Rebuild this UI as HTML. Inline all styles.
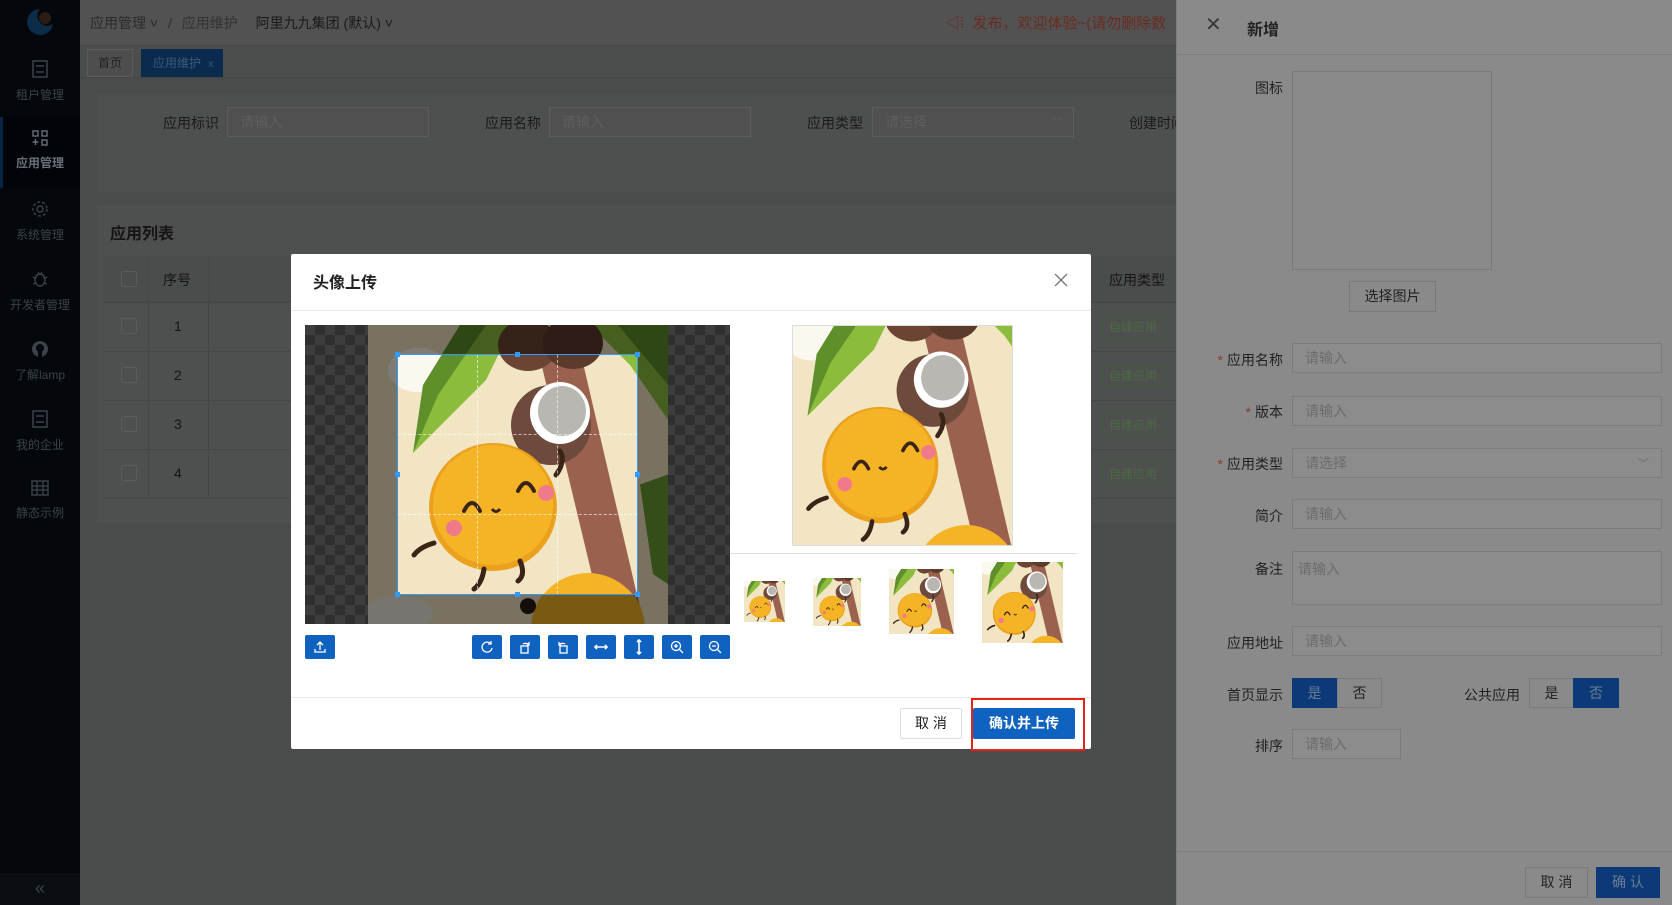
<!DOCTYPE html>
<html><head><meta charset="utf-8">
<style>
*{box-sizing:border-box;margin:0;padding:0}
body{width:1672px;height:905px;overflow:hidden;position:relative;background:#4a4b4b;font-family:"Liberation Sans","Noto Sans CJK SC",sans-serif;font-size:14px;color:#1a1a1a}
.a{position:absolute}
.side{left:0;top:0;width:80px;height:905px;background:#04080c}
.mi{position:absolute;left:0;width:80px;text-align:center;color:#3c4248;font-size:12px}
.mi svg{display:block;margin:0 auto 8px}
.hd{left:80px;top:0;width:1096px;height:46px;background:#525252;border-bottom:1px solid #484848}
.inp{position:absolute;border:1px solid #5c5c5c;background:#505050;color:#5e5e5e;padding-left:12px;font-size:14px;display:flex;align-items:center}
.dinp{position:absolute;left:1292px;width:370px;height:30px;border:1px solid #7c7c7c;background:#8c8c8c;color:#6c6c6c;padding-left:12px;display:flex;align-items:center;font-size:14px}
.dl{position:absolute;right:389px;color:#222;font-size:14px;text-align:right}
.star{color:#8a3a26;margin-right:4px}
.tb{position:absolute;top:635px;width:30px;height:24px;background:#0f62bf;border-radius:2px;display:flex;align-items:center;justify-content:center}
.tag{position:absolute;left:1102px;width:62px;height:22px;border:1px solid #3e5a3a;color:#4a6a40;font-size:12px;text-align:center;line-height:20px}
</style></head><body>
<svg width="0" height="0" style="position:absolute">
<defs>
<g id="pic">
<rect width="300" height="300" fill="#f2e5c3"/>
<ellipse cx="50" cy="45" rx="30" ry="22" fill="#fbf8ef"/>
<ellipse cx="30" cy="290" rx="35" ry="18" fill="#eeeae0"/>
<polygon points="92,0 145,0 118,55 45,128 62,70" fill="#8cbc3c"/>
<polygon points="92,0 118,0 70,70 45,128 55,60" fill="#5e8f2a"/>
<polygon points="222,0 300,0 300,95 262,40" fill="#8cbc3c"/>
<polygon points="250,0 300,0 300,60" fill="#5e8f2a"/>
<polygon points="272,160 300,150 300,260 285,250" fill="#6b9a30"/>
<polygon points="170,25 212,25 276,300 236,300" fill="#9b614f"/>
<ellipse cx="160" cy="20" rx="30" ry="26" fill="#6b4433"/>
<ellipse cx="205" cy="18" rx="30" ry="26" fill="#5d3b2c"/>
<circle cx="183" cy="100" r="40" fill="#6e4a3c"/>
<ellipse cx="192" cy="88" rx="30" ry="31" fill="#fff"/>
<ellipse cx="194" cy="86" rx="24" ry="25" fill="#b9b7b2"/>
<ellipse cx="125" cy="182" rx="64" ry="64" fill="#eba11e"/>
<ellipse cx="125" cy="180" rx="60" ry="60" fill="#f5b425"/>
<path d="M96 186 q8 -16 16 0 M150 166 q8 -16 16 0" stroke="#3a2418" stroke-width="4" fill="none" stroke-linecap="round"/>
<path d="M124 184 q4 5 8 0" stroke="#3a2418" stroke-width="3" fill="none"/>
<circle cx="86" cy="203" r="8" fill="#f07a8a"/>
<circle cx="178" cy="168" r="8" fill="#f07a8a"/>
<path d="M66 218 q-14 4 -20 12 M116 244 q-2 14 -10 20 M152 236 q6 14 -2 20 M188 150 q10 -14 4 -24" stroke="#3a2418" stroke-width="5" fill="none" stroke-linecap="round"/>
<circle cx="220" cy="305" r="57" fill="#f5b425"/>
<circle cx="160" cy="282" r="8" fill="#2a1a10"/>
</g>
</defs></svg>

<!-- sidebar -->
<div class="a side">
 <svg class="a" style="left:24px;top:6px" width="32" height="32" viewBox="0 0 32 32"><path d="M16 3 A13 13 0 1 0 29 18 A10 10 0 0 1 16 3Z" fill="#0c2c48"/><circle cx="21" cy="12" r="6" fill="#2b1c14"/></svg>
 <div class="mi" style="top:60px"><svg width="16" height="18" viewBox="0 0 16 18"><rect x="1" y="1" width="14" height="16" fill="none" stroke="#3c4248" stroke-width="1.5"/><path d="M4 6h8M4 12h8" stroke="#3c4248" stroke-width="1.5"/></svg>租户管理</div>
 <div class="a" style="left:0;top:117px;width:80px;height:71px;background:#010409;border-left:3px solid #0a2444"></div>
 <div class="mi" style="top:130px;color:#6a7076;font-weight:bold"><svg width="16" height="16" viewBox="0 0 16 16"><rect x="1" y="1" width="5" height="5" fill="none" stroke="#6a7076" stroke-width="1.4"/><rect x="10" y="1" width="5" height="5" fill="none" stroke="#6a7076" stroke-width="1.4"/><rect x="10" y="10" width="5" height="5" fill="none" stroke="#6a7076" stroke-width="1.4"/><path d="M3.5 9v6M0.5 12h6" stroke="#6a7076" stroke-width="1.4"/></svg>应用管理</div>
 <div class="mi" style="top:200px"><svg width="18" height="18" viewBox="0 0 18 18"><circle cx="9" cy="9" r="3" fill="none" stroke="#3c4248" stroke-width="1.4"/><circle cx="9" cy="9" r="7" fill="none" stroke="#3c4248" stroke-width="1.4" stroke-dasharray="3 2"/></svg>系统管理</div>
 <div class="mi" style="top:270px;left:-2px;width:84px"><svg width="16" height="18" viewBox="0 0 16 18"><ellipse cx="8" cy="10" rx="5" ry="6" fill="none" stroke="#3c4248" stroke-width="1.4"/><path d="M1 7l3 2M15 7l-3 2M1 14l3-1M15 14l-3-1M6 2l1 2M10 2l-1 2" stroke="#3c4248" stroke-width="1.3"/></svg>开发者管理</div>
 <div class="mi" style="top:340px"><svg width="18" height="18" viewBox="0 0 18 18"><circle cx="9" cy="9" r="8" fill="#3c4248"/><circle cx="9" cy="8" r="4" fill="#04080c"/><rect x="7" y="10" width="4" height="8" fill="#04080c"/></svg>了解lamp</div>
 <div class="mi" style="top:410px"><svg width="16" height="18" viewBox="0 0 16 18"><rect x="1" y="1" width="14" height="16" fill="none" stroke="#3c4248" stroke-width="1.5"/><path d="M4 6h8M4 12h8" stroke="#3c4248" stroke-width="1.5"/></svg>我的企业</div>
 <div class="mi" style="top:480px"><svg width="18" height="16" viewBox="0 0 18 16"><rect x="1" y="1" width="16" height="14" fill="none" stroke="#3c4248" stroke-width="1.4"/><path d="M1 6h16M1 10h16M6 1v14M12 1v14" stroke="#3c4248" stroke-width="1.3"/></svg>静态示例</div>
 <div class="a" style="left:0;top:873px;width:80px;height:32px;background:#0a0e12;color:#3c4248;text-align:center;font-size:18px;line-height:30px">«</div>
</div>

<!-- header -->
<div class="a hd">
 <div class="a" style="left:10px;top:13px;color:#2b2b2b;font-size:14px">应用管理 ˅ <span style="margin:0 6px">/</span> <span style="color:#333">应用维护</span> <span style="margin-left:14px;color:#1a1a1a">阿里九九集团 (默认) ˅</span></div>
 <div class="a" style="left:865px;top:12px;color:#6a2c22;font-size:15px">◁⁞&nbsp; 发布，欢迎体验~(请勿删除数</div>
</div>
<div class="a" style="left:80px;top:46px;width:1096px;height:32px;background:#4c4d4d;border-bottom:1px solid #454545"></div>
<div class="a" style="left:87px;top:49px;width:46px;height:28px;border:1px solid #5a5a5a;background:#4e4e4e;color:#222;font-size:12px;text-align:center;line-height:26px">首页</div>
<div class="a" style="left:141px;top:49px;width:82px;height:28px;background:#0a2b4e;color:#3a5a7a;font-size:12px;line-height:28px;padding-left:12px">应用维护 <span style="margin-left:4px;font-size:10px">x</span></div>

<!-- search card -->
<div class="a" style="left:97px;top:94px;width:1079px;height:98px;background:#4e4f4f"></div>
<div class="a" style="left:163px;top:113px;color:#1a1a1a">应用标识</div>
<div class="inp" style="left:227px;top:107px;width:202px;height:30px">请输入</div>
<div class="a" style="left:485px;top:113px;color:#1a1a1a">应用名称</div>
<div class="inp" style="left:549px;top:107px;width:202px;height:30px">请输入</div>
<div class="a" style="left:807px;top:113px;color:#1a1a1a">应用类型</div>
<div class="inp" style="left:872px;top:107px;width:202px;height:30px">请选择<span style="position:absolute;right:10px;font-size:11px">﹀</span></div>
<div class="a" style="left:1129px;top:113px;color:#1a1a1a">创建时间</div>

<!-- list card -->
<div class="a" style="left:97px;top:205px;width:1079px;height:318px;background:#4e4f4f"></div>
<div class="a" style="left:110px;top:220px;font-size:16px;font-weight:bold;color:#151515">应用列表</div>
<div class="a" style="left:104px;top:256px;width:1072px;height:46px;background:#4b4c4c;border-bottom:1px solid #474747"></div>
<div class="a" style="left:163px;top:270px;color:#151515">序号</div>
<div class="a" style="left:1109px;top:270px;color:#151515">应用类型</div>
<div class="a" style="left:121px;top:271px;width:16px;height:16px;border:1px solid #5a5a5a;border-radius:2px"></div>
<div class="a" style="left:104px;top:302px;width:1072px;height:196px;border-top:1px solid #474747">
 <div class="a" style="left:0;top:48px;width:1072px;border-top:1px solid #474747"></div>
 <div class="a" style="left:0;top:97px;width:1072px;border-top:1px solid #474747"></div>
 <div class="a" style="left:0;top:146px;width:1072px;border-top:1px solid #474747"></div>
 <div class="a" style="left:0;top:195px;width:1072px;border-top:1px solid #474747"></div>
 <div class="a" style="left:44px;top:-46px;height:242px;border-left:1px solid #474747"></div>
 <div class="a" style="left:104px;top:-46px;height:242px;border-left:1px solid #474747"></div>
</div>
<div class="a" style="left:121px;top:318px;width:16px;height:16px;border:1px solid #5a5a5a;border-radius:2px"></div>
<div class="a" style="left:121px;top:367px;width:16px;height:16px;border:1px solid #5a5a5a;border-radius:2px"></div>
<div class="a" style="left:121px;top:416px;width:16px;height:16px;border:1px solid #5a5a5a;border-radius:2px"></div>
<div class="a" style="left:121px;top:465px;width:16px;height:16px;border:1px solid #5a5a5a;border-radius:2px"></div>
<div class="a" style="left:174px;top:318px;color:#151515">1</div>
<div class="a" style="left:174px;top:367px;color:#151515">2</div>
<div class="a" style="left:174px;top:416px;color:#151515">3</div>
<div class="a" style="left:174px;top:465px;color:#151515">4</div>
<div class="tag" style="top:316px">自建应用</div>
<div class="tag" style="top:365px">自建应用</div>
<div class="tag" style="top:414px">自建应用</div>
<div class="tag" style="top:463px">自建应用</div>

<!-- drawer -->
<div class="a" style="left:1176px;top:0;width:496px;height:905px;background:#8a8a8a;border-left:1px solid #7e7e7e"></div>
<div class="a" style="left:1176px;top:54px;width:496px;border-top:1px solid #7e7e7e"></div>
<div class="a" style="left:1205px;top:12px;font-size:20px;color:#3a3a3a">✕</div>
<div class="a" style="left:1247px;top:16px;font-size:16px;font-weight:bold;color:#222">新增</div>
<div class="dl" style="top:78px">图标</div>
<div class="a" style="left:1292px;top:71px;width:200px;height:199px;border:1px solid #7a7a7a"></div>
<div class="a" style="left:1349px;top:281px;width:87px;height:31px;border:1px solid #7a7a7a;text-align:center;line-height:29px;color:#222">选择图片</div>
<div class="dl" style="top:350px"><span class="star">*</span>应用名称</div><div class="dinp" style="top:343px">请输入</div>
<div class="dl" style="top:402px"><span class="star">*</span>版本</div><div class="dinp" style="top:396px">请输入</div>
<div class="dl" style="top:454px"><span class="star">*</span>应用类型</div><div class="dinp" style="top:448px">请选择<span style="position:absolute;right:12px;font-size:11px">﹀</span></div>
<div class="dl" style="top:506px">简介</div><div class="dinp" style="top:499px">请输入</div>
<div class="dl" style="top:559px">备注</div><div class="dinp" style="top:551px;height:54px;align-items:flex-start;padding-top:7px;padding-left:5px">请输入</div>
<div class="dl" style="top:633px">应用地址</div><div class="dinp" style="top:626px">请输入</div>
<div class="dl" style="top:685px">首页显示</div>
<div class="a" style="left:1292px;top:678px;width:45px;height:30px;background:#0c3a78;color:#6b7c95;text-align:center;line-height:30px">是</div>
<div class="a" style="left:1337px;top:678px;width:45px;height:30px;border:1px solid #7a7a7a;text-align:center;line-height:28px;color:#222">否</div>
<div class="a" style="left:1464px;top:685px;color:#222">公共应用</div>
<div class="a" style="left:1529px;top:678px;width:45px;height:30px;border:1px solid #7a7a7a;text-align:center;line-height:28px;color:#222">是</div>
<div class="a" style="left:1573px;top:678px;width:46px;height:30px;background:#0c3a78;color:#6b7c95;text-align:center;line-height:30px">否</div>
<div class="dl" style="top:736px">排序</div><div class="dinp" style="top:729px;width:109px">请输入</div>
<div class="a" style="left:1176px;top:851px;width:496px;border-top:1px solid #7e7e7e"></div>
<div class="a" style="left:1525px;top:867px;width:63px;height:31px;border:1px solid #7a7a7a;text-align:center;line-height:29px;color:#222">取 消</div>
<div class="a" style="left:1596px;top:867px;width:64px;height:31px;background:#0c3a78;text-align:center;line-height:31px;color:#6b7c95">确 认</div>

<!-- modal -->
<div class="a" style="left:291px;top:254px;width:800px;height:495px;background:#fff;border-radius:2px">
 <div class="a" style="left:22px;top:15px;font-size:16px;font-weight:bold;color:#222">头像上传</div>
 <svg class="a" style="left:763px;top:19px" width="14" height="14" viewBox="0 0 14 14"><path d="M1 1L13 13M13 1L1 13" stroke="#777" stroke-width="1.3"/></svg>
 <div class="a" style="left:0;top:56px;width:800px;border-top:1px solid #e8e8e8"></div>
 <div class="a" style="left:0;top:443px;width:800px;border-top:1px solid #e8e8e8"></div>
</div>
<!-- cropper -->
<div class="a" style="left:305px;top:325px;width:425px;height:299px;overflow:hidden;background-color:#7a7a7a;background-image:linear-gradient(45deg,#5f5f5f 25%,transparent 25%,transparent 75%,#5f5f5f 75%),linear-gradient(45deg,#5f5f5f 25%,transparent 25%,transparent 75%,#5f5f5f 75%);background-size:20px 20px;background-position:0 0,10px 10px">
 <svg class="a" style="left:63px;top:0" width="300" height="299" viewBox="0 0 300 300" preserveAspectRatio="none"><use href="#pic"/></svg>
 <div class="a" style="left:0;top:0;width:425px;height:299px;background:rgba(0,0,0,.5)"></div>
 <svg class="a" style="left:92px;top:29px" width="241" height="241" viewBox="29 29 241 241"><use href="#pic"/></svg>
 <div class="a" style="left:92px;top:29px;width:241px;height:241px;border:1px solid #39f">
  <div class="a" style="left:79px;top:0;height:239px;border-left:1px dashed rgba(255,255,255,.6)"></div>
  <div class="a" style="left:159px;top:0;height:239px;border-left:1px dashed rgba(255,255,255,.6)"></div>
  <div class="a" style="top:79px;left:0;width:239px;border-top:1px dashed rgba(255,255,255,.6)"></div>
  <div class="a" style="top:159px;left:0;width:239px;border-top:1px dashed rgba(255,255,255,.6)"></div>
 </div>
 <div class="a" style="left:90px;top:27px;width:5px;height:5px;background:#39f"></div>
 <div class="a" style="left:210px;top:27px;width:5px;height:5px;background:#39f"></div>
 <div class="a" style="left:330px;top:27px;width:5px;height:5px;background:#39f"></div>
 <div class="a" style="left:90px;top:147px;width:5px;height:5px;background:#39f"></div>
 <div class="a" style="left:330px;top:147px;width:5px;height:5px;background:#39f"></div>
 <div class="a" style="left:90px;top:267px;width:5px;height:5px;background:#39f"></div>
 <div class="a" style="left:210px;top:267px;width:5px;height:5px;background:#39f"></div>
 <div class="a" style="left:330px;top:267px;width:5px;height:5px;background:#39f"></div>
</div>
<!-- previews -->
<svg class="a" style="left:793px;top:326px;outline:1px solid #ddd" width="219" height="219" viewBox="29 29 241 241"><use href="#pic"/></svg>
<div class="a" style="left:730px;top:553px;width:347px;border-top:1px solid #ddd"></div>
<svg class="a" style="left:744px;top:581px" width="41" height="41" viewBox="29 29 241 241"><use href="#pic"/></svg>
<svg class="a" style="left:813px;top:578px" width="48" height="48" viewBox="29 29 241 241"><use href="#pic"/></svg>
<svg class="a" style="left:889px;top:569px" width="65" height="65" viewBox="29 29 241 241"><use href="#pic"/></svg>
<svg class="a" style="left:982px;top:562px" width="81" height="81" viewBox="29 29 241 241"><use href="#pic"/></svg>
<!-- toolbar -->
<div class="tb" style="left:305px"><svg width="14" height="14" viewBox="0 0 14 14" fill="none" stroke="#fff" stroke-width="1.3"><path d="M7 10V2M4 5l3-3 3 3M2 9v3h10V9"/></svg></div>
<div class="tb" style="left:472px"><svg width="14" height="14" viewBox="0 0 14 14" fill="none" stroke="#fff" stroke-width="1.3"><path d="M11 4A5 5 0 1 0 12 8M11 1v3H8"/></svg></div>
<div class="tb" style="left:510px"><svg width="14" height="14" viewBox="0 0 14 14" fill="none" stroke="#fff" stroke-width="1.3"><rect x="3" y="6" width="7" height="7"/><path d="M5 4a4 3 0 0 1 6 1M11 2v3H9"/></svg></div>
<div class="tb" style="left:548px"><svg width="14" height="14" viewBox="0 0 14 14" fill="none" stroke="#fff" stroke-width="1.3"><rect x="4" y="6" width="7" height="7"/><path d="M9 4a4 3 0 0 0 -6 1M3 2v3h2"/></svg></div>
<div class="tb" style="left:586px"><svg width="16" height="14" viewBox="0 0 16 14" fill="none" stroke="#fff" stroke-width="1.6"><path d="M2 7h12M4 5L2 7l2 2M12 5l2 2-2 2"/></svg></div>
<div class="tb" style="left:624px"><svg width="14" height="16" viewBox="0 0 14 16" fill="none" stroke="#fff" stroke-width="1.6"><path d="M7 1v14M5 3l2-2 2 2M5 13l2 2 2-2"/></svg></div>
<div class="tb" style="left:662px"><svg width="14" height="14" viewBox="0 0 14 14" fill="none" stroke="#fff" stroke-width="1.3"><circle cx="6" cy="6" r="4.5"/><path d="M9.5 9.5L13 13M6 4v4M4 6h4"/></svg></div>
<div class="tb" style="left:700px"><svg width="14" height="14" viewBox="0 0 14 14" fill="none" stroke="#fff" stroke-width="1.3"><circle cx="6" cy="6" r="4.5"/><path d="M9.5 9.5L13 13M4 6h4"/></svg></div>
<!-- footer -->
<div class="a" style="left:900px;top:708px;width:62px;height:31px;border:1px solid #ddd;border-radius:2px;text-align:center;line-height:29px;color:#222">取 消</div>
<div class="a" style="left:971px;top:698px;width:114px;height:53px;border:2px solid #e8201a"></div>
<div class="a" style="left:973px;top:708px;width:102px;height:31px;background:#0f62bf;border-radius:2px;text-align:center;line-height:31px;color:#fff;font-weight:bold">确认并上传</div>
</body></html>
